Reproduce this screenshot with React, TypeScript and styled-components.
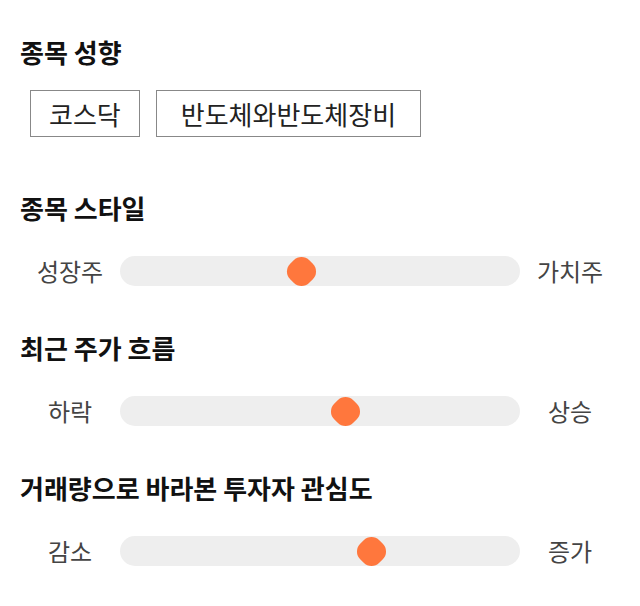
import React from 'react';
import styled, { createGlobalStyle } from 'styled-components';

const GlobalStyle = createGlobalStyle`
  body {
    margin: 0;
    background: #ffffff;
    font-family: 'Noto Sans CJK KR', 'Noto Sans', sans-serif;
  }
`;

const Container = styled.div`
  width: 640px;
  box-sizing: border-box;
  padding: 37px 20px 0;
`;

const Section = styled.section<{ $gap: number }>`
  margin-bottom: ${(p) => p.$gap}px;
`;

const Title = styled.h2<{ $space: number }>`
  margin: 0 0 ${(p) => p.$space}px;
  font-size: 26px;
  line-height: 30px;
  font-weight: 700;
  color: #111111;
`;

const ChipRow = styled.div`
  display: flex;
  gap: 16px;
  padding: 0 10px;
`;

const Chip = styled.div<{ $pad: number }>`
  height: 47px;
  box-sizing: border-box;
  display: flex;
  align-items: center;
  padding: 0 ${(p) => p.$pad}px;
  border: 1px solid #888888;
  font-size: 26px;
  color: #222222;
`;

const SliderRow = styled.div`
  display: grid;
  grid-template-columns: 100px 1fr 100px;
  align-items: center;
  height: 30px;
`;

const SideLabel = styled.span`
  text-align: center;
  font-size: 24px;
  line-height: 30px;
  color: #444444;
`;

const Track = styled.div`
  position: relative;
  height: 30px;
  border-radius: 15px;
  background: #eeeeee;
`;

const Thumb = styled.div`
  position: absolute;
  top: 1.5px;
  width: 27px;
  height: 27px;
  margin-left: -13.5px;
  border-radius: 11px;
  background: #ff773d;
  transform: rotate(45deg);
`;

type SliderProps = { left: string; right: string; value: number };

const Slider: React.FC<SliderProps> = ({ left, right, value }) => (
  <SliderRow>
    <SideLabel>{left}</SideLabel>
    <Track>
      <Thumb style={{ left: `calc(14.5px + (100% - 29px) * ${value})` }} />
    </Track>
    <SideLabel>{right}</SideLabel>
  </SliderRow>
);

const sliders = [
  { title: '종목 스타일', left: '성장주', right: '가치주', value: 0.45 },
  { title: '최근 주가 흐름', left: '하락', right: '상승', value: 0.57 },
  { title: '거래량으로 바라본 투자자 관심도', left: '감소', right: '증가', value: 0.64 },
];

const App: React.FC = () => (
  <>
    <GlobalStyle />
    <Container>
      <Section $gap={56}>
        <Title $space={23}>종목 성향</Title>
        <ChipRow>
          <Chip $pad={18}>코스닥</Chip>
          <Chip $pad={24}>반도체와반도체장비</Chip>
        </ChipRow>
      </Section>
      {sliders.map((s) => (
        <Section key={s.title} $gap={47}>
          <Title $space={33}>{s.title}</Title>
          <Slider left={s.left} right={s.right} value={s.value} />
        </Section>
      ))}
    </Container>
  </>
);

export default App;
